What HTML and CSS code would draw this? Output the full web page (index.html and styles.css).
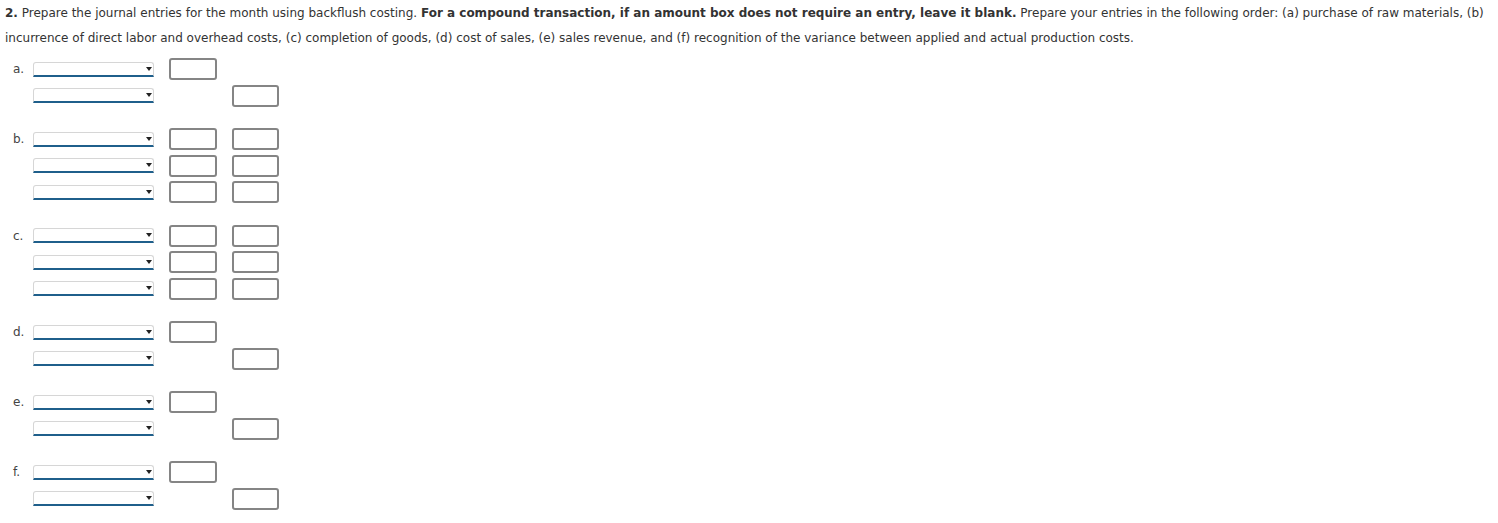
FILE: index.html
```html
<!DOCTYPE html>
<html lang="en">
<head>
  <meta charset="UTF-8" />
  <title>Backflush Costing Journal Entries</title>
  <link rel="stylesheet" href="styles.css">
</head>
<body>
  <div class="question">
    <p class="prompt"><b>2.</b> Prepare the journal entries for the month using backflush costing. <b>For a compound transaction, if an amount box does not require an entry, leave it blank.</b> Prepare your entries in the following order: (a) purchase of raw materials, (b) incurrence of direct labor and overhead costs, (c) completion of goods, (d) cost of sales, (e) sales revenue, and (f) recognition of the variance between applied and actual production costs.</p>

    <div class="entries">
      <!-- a: one debit, one credit -->
      <div class="entry">
        <div class="row"><span class="tag">a.</span><span class="pick"><select></select></span><input class="amt" type="text"><span></span></div>
        <div class="row"><span class="tag"></span><span class="pick"><select></select></span><span></span><input class="amt" type="text"></div>
      </div>

      <div class="entry">
        <div class="row"><span class="tag">b.</span><span class="pick"><select></select></span><input class="amt" type="text"><input class="amt" type="text"></div>
        <div class="row"><span class="tag"></span><span class="pick"><select></select></span><input class="amt" type="text"><input class="amt" type="text"></div>
        <div class="row"><span class="tag"></span><span class="pick"><select></select></span><input class="amt" type="text"><input class="amt" type="text"></div>
      </div>

      <div class="entry">
        <div class="row"><span class="tag">c.</span><span class="pick"><select></select></span><input class="amt" type="text"><input class="amt" type="text"></div>
        <div class="row"><span class="tag"></span><span class="pick"><select></select></span><input class="amt" type="text"><input class="amt" type="text"></div>
        <div class="row"><span class="tag"></span><span class="pick"><select></select></span><input class="amt" type="text"><input class="amt" type="text"></div>
      </div>

      <div class="entry">
        <div class="row"><span class="tag">d.</span><span class="pick"><select></select></span><input class="amt" type="text"><span></span></div>
        <div class="row"><span class="tag"></span><span class="pick"><select></select></span><span></span><input class="amt" type="text"></div>
      </div>

      <div class="entry">
        <div class="row"><span class="tag">e.</span><span class="pick"><select></select></span><input class="amt" type="text"><span></span></div>
        <div class="row"><span class="tag"></span><span class="pick"><select></select></span><span></span><input class="amt" type="text"></div>
      </div>

      <div class="entry">
        <div class="row"><span class="tag">f.</span><span class="pick"><select></select></span><input class="amt" type="text"><span></span></div>
        <div class="row"><span class="tag"></span><span class="pick"><select></select></span><span></span><input class="amt" type="text"></div>
      </div>
    </div>
  </div>
</body>
</html>
```

FILE: styles.css
```css
body {
  margin: 0;
  background-color: #fff;
  color: #333;
  font-family: "DejaVu Sans", Verdana, sans-serif;
  font-size: 12px;
}
.question {
  padding: 0 5px;
}
.prompt {
  margin: 0;
  padding-top: 1px;
  line-height: 24.5px;
}
.entries {
  margin-top: 8px;
}
.entry {
  display: flex;
  flex-direction: column;
  gap: 4.5px;
  margin-bottom: 21.5px;
}
.row {
  display: grid;
  grid-template-columns: 28px 136px 63px 48px;
  align-items: center;
  height: 22px;
}
.tag {
  padding-left: 8px;
  font-size: 12px;
  color: #444;
}
.pick {
  position: relative;
  display: block;
  width: 121px;
  height: 15px;
}
.pick select {
  appearance: none;
  -webkit-appearance: none;
  display: block;
  width: 100%;
  height: 15px;
  margin: 0;
  padding: 0;
  background: #fff;
  border: 1px solid #d6d6d6;
  border-bottom: 2px solid #1f5f8b;
  border-radius: 3px 3px 0 0;
  box-sizing: border-box;
}
.pick::after {
  content: "";
  position: absolute;
  right: 2px;
  top: 5px;
  border-left: 3.5px solid transparent;
  border-right: 3.5px solid transparent;
  border-top: 4px solid #222;
}
.amt {
  display: block;
  width: 48px;
  height: 22px;
  margin: 0;
  padding: 0;
  box-sizing: border-box;
  border: 2px solid #858585;
  border-radius: 3px;
  background: #fff;
}
.row > .amt:last-child {
  width: 47px;
}
```
